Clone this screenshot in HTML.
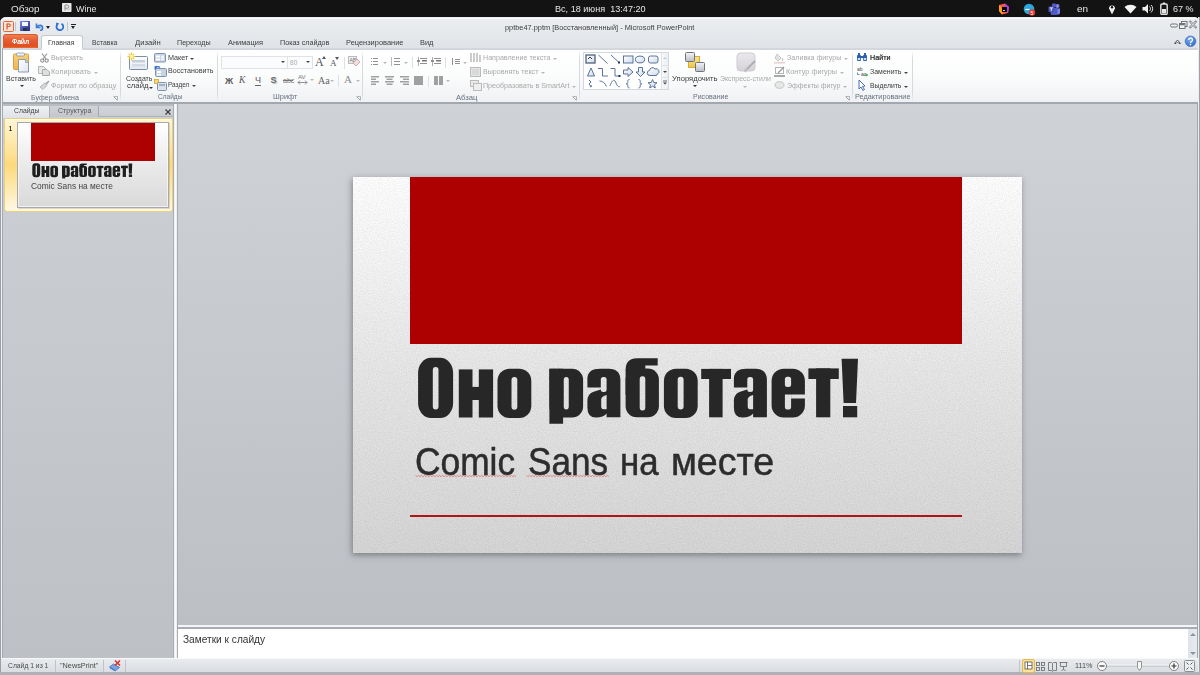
<!DOCTYPE html>
<html><head><meta charset="utf-8">
<style>
*{margin:0;padding:0;box-sizing:border-box}
html,body{width:1200px;height:675px;overflow:hidden;background:#131313;font-family:"Liberation Sans",sans-serif;position:relative}
div,svg{position:absolute}
.t{white-space:nowrap;line-height:1;transform-origin:0 0}
.sep{width:1px;background:linear-gradient(rgba(214,218,223,0),#d6dadf 15%,#d6dadf 85%,rgba(214,218,223,0))}
.arr{width:0;height:0;border-left:2px solid transparent;border-right:2px solid transparent;border-top:2px solid #444}
.arrd{width:0;height:0;border-left:2px solid transparent;border-right:2px solid transparent;border-top:2px solid #b8b8b8}

</style></head><body>
<!-- window frame -->
<div style="left:0;top:17px;width:1200px;height:658px;background:#c5c9ce;border-radius:6px 6px 0 0;overflow:hidden">
  <div style="left:0;top:0;width:1200px;height:16px;background:linear-gradient(#eceef1,#e6e9ec)"></div><div style="left:3px;top:0.5px;width:1194px;height:1.5px;background:#fafbfc"></div>
  <div style="left:0;top:16px;width:1200px;height:16px;background:linear-gradient(#e6e9ec,#dfe2e6)"></div>
  <div style="left:0;top:0;width:1px;height:658px;background:#9aa0a7"></div>
</div>
<!-- file tab -->
<div style="left:2.5px;top:34px;width:35px;height:14.8px;background:linear-gradient(#f08050 0%,#e65a30 40%,#df4d24 80%,#f0892f 100%);border-radius:3px 3px 0 0;border:1px solid #d55a30;border-bottom:none"></div>
<!-- home tab -->
<div style="left:41px;top:35px;width:42px;height:15px;background:linear-gradient(#ffffff,#fdfdfe);border:1px solid #c6cbd1;border-bottom:none;border-radius:3px 3px 0 0"></div>
<!-- ribbon body -->
<div style="left:1px;top:48px;width:1197px;height:54px;background:linear-gradient(#ffffff 0%,#fbfcfc 50%,#eff1f4 100%);border-top:2px solid #d3d7dc"></div>
<div style="left:42px;top:47px;width:40px;height:4px;background:#fff"></div>
<!-- ribbon bottom border -->
<div style="left:1px;top:102px;width:1198px;height:2px;background:#a3a8ae"></div>
<div style="left:1px;top:104px;width:177px;height:2px;background:#b9bdc2"></div>
<!-- group separators -->
<div class="sep" style="left:120px;top:51px;height:50px"></div>
<div class="sep" style="left:217px;top:51px;height:50px"></div>
<div class="sep" style="left:362px;top:51px;height:50px"></div>
<div class="sep" style="left:579px;top:51px;height:50px"></div>
<div class="sep" style="left:852px;top:51px;height:50px"></div>
<div class="sep" style="left:912px;top:51px;height:50px"></div>

<!-- left panel -->
<div style="left:3px;top:106px;width:171px;height:552px;background:linear-gradient(#cdd0d5,#bdc0c5)"></div>
<div style="left:3px;top:106px;width:171px;height:11px;background:linear-gradient(#d3d7db,#c9cdd2);border-bottom:1px solid #aeb3b9;border-right:1px solid #aeb3b9"></div>
<div style="left:3px;top:106px;width:47px;height:12px;background:linear-gradient(#f0f2f4,#dfe2e6);border-right:1px solid #a9aeb4"></div>
<div style="left:50px;top:106px;width:49px;height:11px;background:linear-gradient(#d0d4d9,#c3c7cc);border-right:1px solid #a4a9af"></div>
<svg style="left:164px;top:108px" width="8" height="8"><path d="M1.5 1.5L6.5 6.5M6.5 1.5L1.5 6.5" stroke="#444" stroke-width="1.4"/></svg>
<div style="left:1px;top:48px;width:1px;height:627px;background:#eef0f2"></div>
<div style="left:2px;top:48px;width:1px;height:627px;background:#a4a9af"></div>
<div style="left:173px;top:104px;width:1px;height:554px;background:#aab0b6"></div>
<!-- splitter -->
<div style="left:174px;top:104px;width:3px;height:554px;background:linear-gradient(90deg,#e9ebee,#fafbfc 50%,#e9ebee)"></div>
<div style="left:177px;top:104px;width:1px;height:554px;background:#a9adb3"></div>
<!-- main area -->
<div style="left:178px;top:104px;width:1019px;height:521px;background:linear-gradient(#cfd2d6,#bcbfc4)"></div>
<div style="left:178px;top:625px;width:1020px;height:2px;background:#f4f5f6"></div>
<div style="left:178px;top:627px;width:1020px;height:2px;background:#a9adb3"></div>
<!-- notes -->
<div style="left:178px;top:629px;width:1020px;height:29px;background:#fff"></div>
<div style="left:1188px;top:629px;width:10px;height:29px;background:linear-gradient(90deg,#dfe3e8,#e9ecef)"></div>
<svg style="left:1188px;top:630px" width="10" height="28"><path d="M2 6L5 3L8 6Z" fill="#8a96a2"/><path d="M2 22L5 25L8 22Z" fill="#8a96a2"/></svg>
<div style="left:1197px;top:104px;width:1px;height:571px;background:#a2a7ad"></div><div style="left:1198px;top:17px;width:1px;height:658px;background:#eceef0"></div><div style="left:1199px;top:17px;width:1px;height:658px;background:#9ea3a9"></div>
<!-- status bar -->
<div style="left:1px;top:658px;width:1197px;height:15px;background:linear-gradient(#e9ebee,#d9dce0);border-top:1px solid #f7f8f9"></div>
<div style="left:0;top:672px;width:1200px;height:3px;background:#aeb2b8"></div>
<div style="left:55px;top:660px;width:1px;height:12px;background:#c0c4c9"></div>
<div style="left:103px;top:660px;width:1px;height:12px;background:#c0c4c9"></div>
<div style="left:125px;top:660px;width:1px;height:12px;background:#c0c4c9"></div>
<div style="left:1019px;top:660px;width:1px;height:12px;background:#c0c4c9"></div>

<!-- slide thumbnail -->
<div style="left:4px;top:118px;width:169px;height:94px;background:linear-gradient(180deg,#fff6d6 0%,#fde39a 35%,#fdd97c 50%,#fde9ae 75%,#fff8e4 100%);border:1px solid #eccf7c;border-radius:3px"></div>
<div style="left:5px;top:119px;width:167px;height:1px;background:rgba(255,255,255,.7)"></div>
<div style="left:18px;top:123px;width:152px;height:86px;background:rgba(0,0,0,.12)"></div>
<div style="left:17px;top:122px;width:152px;height:86px;background:linear-gradient(#ffffff,#ececec 45%,#d9d9d9);border:1px solid #a6aaaf;box-shadow:inset 0 0 0 1px rgba(255,255,255,.6)">
  <div style="left:13px;top:0;width:124px;height:38px;background:#ad0000"></div>
</div>
<div class="t" style="left:31px;top:182px;font-size:9.3px;color:#444;transform:scaleX(0.9)">Comic Sans на месте</div>

<!-- main slide -->
<div style="left:353px;top:177px;width:669px;height:376px;background:linear-gradient(#ffffff,#f6f6f6 22%,#e8e8e8 52%,#d7d7d7 100%);box-shadow:-1px 2px 6px rgba(50,54,60,.5)">
  <svg style="left:0;top:0" width="669" height="376"><filter id="nz" x="0" y="0" width="100%" height="100%"><feTurbulence type="fractalNoise" baseFrequency="0.9" numOctaves="2" seed="3"/><feColorMatrix type="matrix" values="0 0 0 0 0  0 0 0 0 0  0 0 0 0 0  0 0 0 -1.6 1.1"/></filter><rect width="669" height="376" filter="url(#nz)" opacity="0.08"/></svg>
  <div style="left:57px;top:0;width:552px;height:167px;background:#ad0000"></div>
  <div style="left:57px;top:338px;width:552px;height:2px;background:#b01414"></div>
</div>
<!-- QAT -->
<svg style="left:3px;top:21px" width="11" height="11"><rect x="0.5" y="0.5" width="10" height="10" rx="1" fill="#fbe2d3" stroke="#e2683a"/><path d="M3.5 2.5h2.5a1.8 1.8 0 0 1 0 3.6H4.6V8.6H3.5Z" fill="#d24a1a"/><path d="M4.6 3.4v1.8h1.3a0.9 0.9 0 0 0 0-1.8Z" fill="#fbe2d3"/></svg>
<div style="left:15px;top:22px;width:1px;height:9px;background:#c3c7cc"></div>
<svg style="left:20px;top:21px" width="10" height="10"><rect x="0" y="0" width="10" height="10" rx="1" fill="#4353b8"/><rect x="0" y="0" width="10" height="10" rx="1" fill="url(#sg)"/><defs><linearGradient id="sg" x1="0" y1="0" x2="1" y2="1"><stop offset="0" stop-color="#7b8be0"/><stop offset="1" stop-color="#1f2a86"/></linearGradient></defs><rect x="2" y="1" width="6" height="4" fill="#f4f6fb"/><rect x="3" y="7" width="4" height="3" fill="#2a2f4a"/></svg>
<svg style="left:34px;top:22px" width="10" height="9"><path d="M2.5 1.5V5.5H6.5" fill="none" stroke="#3a7bd6" stroke-width="1.6"/><path d="M3 5C5 2.5 8.5 3 8.5 6C8.5 7.5 7.5 8.5 6 8.5" fill="none" stroke="#3a7bd6" stroke-width="1.7"/></svg>
<div style="left:46px;top:26px;width:0;height:0;border-left:2px solid transparent;border-right:2px solid transparent;border-top:3px solid #222"></div>
<svg style="left:55px;top:22px" width="9" height="9"><path d="M6.5 1.8A3.4 3.4 0 1 1 2.3 2.6" fill="none" stroke="#2f6fd2" stroke-width="1.8"/><path d="M1 0.5L4.2 1.5L1.6 4.3Z" fill="#2f6fd2"/></svg>
<div style="left:67px;top:22px;width:1px;height:9px;background:#c3c7cc"></div>
<div style="left:71px;top:24px;width:5px;height:1px;background:#222"></div>
<div style="left:71px;top:26px;width:0;height:0;border-left:2.5px solid transparent;border-right:2.5px solid transparent;border-top:3px solid #222"></div>
<!-- window controls -->
<svg style="left:1168px;top:19px" width="32" height="12">
 <rect x="2.5" y="5" width="7" height="3" rx="1.5" fill="#f4f5f7" stroke="#707378" stroke-width="1"/>
 <rect x="13.5" y="2.5" width="5.5" height="5" fill="#f4f5f7" stroke="#707378" stroke-width="1"/>
 <rect x="11.5" y="4.5" width="5.5" height="5" fill="#f4f5f7" stroke="#707378" stroke-width="1"/><rect x="12" y="5" width="4.5" height="1.3" fill="#707378"/>
 <path d="M22.3 2.8l5.4 5.4M27.7 2.8l-5.4 5.4" stroke="#808388" stroke-width="2.2" stroke-linecap="square"/><path d="M22.3 2.8l5.4 5.4M27.7 2.8l-5.4 5.4" stroke="#f4f5f7" stroke-width=".9"/>
</svg>
<svg style="left:1173px;top:38px" width="9" height="7"><path d="M1.5 5.5L4.5 2L7.5 5.5L6 5.5L4.5 4L3 5.5Z" fill="#fff" stroke="#555" stroke-width="1" stroke-linejoin="round"/></svg>
<svg style="left:1184px;top:35px" width="13" height="13"><defs><radialGradient id="hg" cx=".4" cy=".3" r=".8"><stop offset="0" stop-color="#79aef0"/><stop offset="1" stop-color="#2c69c4"/></radialGradient></defs><circle cx="6.5" cy="6.3" r="5.3" fill="url(#hg)" stroke="#2b63b8" stroke-width=".6"/><path d="M4.7 5a1.9 1.9 0 1 1 2.6 1.7c-.6.3-.8.6-.8 1.3" fill="none" stroke="#fff" stroke-width="1.3"/><circle cx="6.5" cy="9.6" r=".8" fill="#fff"/></svg>
<!-- top bar icons -->
<svg style="left:62px;top:3px" width="9.5" height="9"><rect x="0" y="0" width="9.5" height="9" rx=".8" fill="#e9e9e9"/><path d="M3 7.5V2h2.2a1.6 1.6 0 0 1 0 3.2H3" fill="none" stroke="#8a8a8a" stroke-width="1"/><path d="M5.5 6.5c1.5 .3 2.5-.3 2-1" fill="none" stroke="#aaa" stroke-width=".8"/></svg>
<svg style="left:998px;top:3px" width="12" height="12"><path d="M1 2L7 0.5L11 4L10 10L4 11.5L1 8Z" fill="#ff5a3c"/><path d="M7 0.5L11 4L10 10L6 7Z" fill="#b23cf0"/><path d="M1 2L6 7L4 11.5L1 8Z" fill="#ff9f1c"/><rect x="4" y="4" width="5" height="5" fill="#000"/><rect x="5" y="7.2" width="2" height="0.8" fill="#fff"/></svg>
<svg style="left:1023px;top:3px" width="13" height="13"><circle cx="6" cy="6" r="5.3" fill="#29a8e0"/><path d="M2.5 6.5h4" stroke="#fff" stroke-width="1.2"/><circle cx="9" cy="9.5" r="3.2" fill="#e53935"/><text x="9" y="11.5" font-size="5" fill="#fff" text-anchor="middle" font-family="Liberation Sans">5</text></svg>
<svg style="left:1048px;top:3px" width="13" height="12"><circle cx="9.5" cy="3" r="2" fill="#7b83eb"/><path d="M7.5 5.5h4.5v4a2 2 0 0 1-2 2h-2.5Z" fill="#7b83eb"/><circle cx="6" cy="2.5" r="2.2" fill="#5059c9"/><path d="M2.5 5h7v4.5a3 3 0 0 1-3 3h-1a3 3 0 0 1-3-3Z" fill="#5059c9"/><rect x="0.5" y="3.5" width="5.5" height="5.5" rx=".6" fill="#4b53bc"/><path d="M1.8 4.9h3M3.3 4.9v3" stroke="#fff" stroke-width="0.9"/></svg>
<svg style="left:1108px;top:3px" width="8" height="12"><path d="M4 11.5L1 5.5A3 3 0 1 1 7 5.5Z" fill="#eee"/><circle cx="4" cy="4.2" r="1.2" fill="#131313"/></svg>
<svg style="left:1124px;top:4px" width="13" height="10"><path d="M0.5 3A9 9 0 0 1 12.5 3L6.5 9.5Z" fill="#f4f4f4"/></svg>
<svg style="left:1142px;top:3px" width="12" height="11"><path d="M0.5 4h2.5l3-3v9.5l-3-3H0.5Z" fill="#eee"/><path d="M7.5 3.5a3 3 0 0 1 0 4.5M9 2a5 5 0 0 1 0 7.5" fill="none" stroke="#ddd" stroke-width="1"/></svg>
<svg style="left:1160px;top:2px" width="8" height="13"><rect x="3" y="0.5" width="2" height="1.5" fill="#e6e6e6"/><rect x="0.8" y="2" width="6.4" height="10.4" rx="1.2" fill="none" stroke="#e6e6e6" stroke-width="1.4"/><rect x="2" y="7" width="4" height="4.5" fill="#e6e6e6"/></svg>
<!-- Clipboard group -->
<svg style="left:12px;top:52px" width="20" height="21">
 <defs><linearGradient id="cb" x1="0" y1="0" x2="0" y2="1"><stop offset="0" stop-color="#f8d27a"/><stop offset="1" stop-color="#eeb44a"/></linearGradient>
 <linearGradient id="dc" x1="0" y1="0" x2="1" y2="1"><stop offset="0" stop-color="#ffffff"/><stop offset="1" stop-color="#dfe5ee"/></linearGradient></defs>
 <rect x="1.5" y="2" width="15" height="15.5" rx="1.2" fill="url(#cb)" stroke="#d6a043"/>
 <rect x="4.5" y="1" width="8" height="3" rx="1" fill="#eef1f5" stroke="#8a95a3" stroke-width=".8"/>
 <path d="M6.5 7.5h7l3 3v9.5h-10Z" fill="url(#dc)" stroke="#8d9bb0"/>
 <path d="M13.5 7.5v3h3" fill="#c9d3e2" stroke="#8d9bb0" stroke-width=".8"/>
</svg>
<div class="arr" style="left:20px;top:85px;border-top-color:#333;border-left-width:2.5px;border-right-width:2.5px;border-top-width:2.5px"></div>
<svg style="left:40px;top:53px" width="9" height="10"><path d="M2 0.5L6 6M7 0.5L3 6" stroke="#9a9a9a" stroke-width="1.2"/><circle cx="2.3" cy="7.6" r="1.6" fill="none" stroke="#8f8f8f" stroke-width="1.1"/><circle cx="6.7" cy="7.6" r="1.6" fill="none" stroke="#8f8f8f" stroke-width="1.1"/></svg>
<svg style="left:38px;top:66px" width="12" height="10"><path d="M0.5 0.5h5l2 2v5h-7Z" fill="#e9e9e9" stroke="#b5b5b5"/><path d="M4.5 3.5h4.5l2.5 2.5v3.5h-7Z" fill="#dedede" stroke="#aaaaaa"/></svg>
<svg style="left:39px;top:80px" width="11" height="10"><path d="M1 7L5.5 3L8 5.5L4 9.5Z" fill="#d6d6d6" stroke="#b0b0b0" stroke-width=".8"/><path d="M6 3.5L9.5 0.5L10.5 1.5L7.5 5Z" fill="#a8a8a8"/></svg>
<div class="arrd" style="left:94px;top:72px"></div>
<!-- Slides group -->
<svg style="left:127px;top:52px" width="22" height="20">
 <defs><linearGradient id="ns" x1="0" y1="0" x2="0" y2="1"><stop offset="0" stop-color="#ffffff"/><stop offset="1" stop-color="#e3e8ef"/></linearGradient></defs>
 <rect x="2.5" y="4.5" width="18" height="13" rx="1" fill="url(#ns)" stroke="#7d8ea4"/>
 <rect x="5" y="8" width="13" height="2.5" fill="#c5cfdc"/><rect x="5" y="12" width="13" height="2.5" fill="#d3dbe6"/>
 <path d="M4.5 0.5v8M0.5 4.5h8M1.8 1.8l5.4 5.4M7.2 1.8l-5.4 5.4" stroke="#f2c11e" stroke-width="1.1"/><circle cx="4.5" cy="4.5" r="1.8" fill="#fff4a8"/>
</svg>
<div class="arr" style="left:149px;top:87px;border-top-color:#333"></div>
<svg style="left:154px;top:53px" width="12" height="10"><rect x=".5" y=".5" width="11" height="8.5" rx="1" fill="#c8d3e2" stroke="#7f93ad"/><rect x="2" y="2.5" width="4" height="2" fill="#fff"/><rect x="2" y="5.5" width="4" height="2" fill="#fff"/><rect x="7" y="2.5" width="3" height="5" fill="#eef2f7"/></svg>
<div class="arr" style="left:190px;top:58px;border-top-color:#444"></div>
<svg style="left:154px;top:65px" width="13" height="12"><rect x="1.5" y="3.5" width="11" height="8" rx="1" fill="#c8d3e2" stroke="#7f93ad"/><rect x="3" y="6" width="4" height="2" fill="#fff"/><rect x="3" y="9" width="4" height="1.5" fill="#fff"/><path d="M1 4.5C1 1.5 4 1 6 2.5" fill="none" stroke="#2e6ad0" stroke-width="1.4"/><path d="M0 2L2.5 0.5L2.5 4Z" fill="#2e6ad0"/></svg>
<svg style="left:154px;top:79px" width="13" height="12"><rect x="0.5" y="0.5" width="4" height="4" fill="#f6d86a" stroke="#d7a42c" stroke-width=".8"/><rect x="3.5" y="3.5" width="9" height="8" rx="1" fill="#dbe2eb" stroke="#7f93ad"/><rect x="5" y="5" width="6" height="2" fill="#9eb1c8"/></svg>
<div class="arr" style="left:192px;top:85px;border-top-color:#444"></div>
<!-- Font group -->
<div style="left:221px;top:56px;width:67px;height:13px;border:1px solid #dfe3e8;background:#fbfcfd"></div>
<div style="left:288px;top:56px;width:25px;height:13px;border:1px solid #dfe3e8;border-left:none;background:#fbfcfd"></div>
<div class="arr" style="left:281px;top:61px;border-top-color:#444"></div>
<div class="arr" style="left:306px;top:61px;border-top-color:#444"></div>
<div class="t" style="left:315px;top:56px;font-family:'Liberation Serif';font-size:12px;color:#555">A</div>
<svg style="left:322px;top:56px" width="4" height="3"><path d="M0 3L2 0L4 3Z" fill="#555"/></svg>
<div class="t" style="left:330px;top:59px;font-family:'Liberation Serif';font-size:9px;color:#555">A</div>
<svg style="left:335px;top:57px" width="4" height="3"><path d="M0 0L2 3L4 0Z" fill="#555"/></svg>
<div style="left:344px;top:57px;width:1px;height:12px;background:#dde0e4"></div>
<svg style="left:348px;top:56px" width="13" height="12"><rect x=".5" y=".5" width="8" height="7" fill="#eee" stroke="#bbb"/><text x="1.5" y="6" font-size="5" fill="#777" font-family="Liberation Sans">AB</text><path d="M5 7L9 3L12 6L8 10Z" fill="#f3dede" stroke="#b9a0a0" stroke-width=".8"/></svg>
<div class="t" style="left:225px;top:76.5px;font-size:9px;font-weight:bold;color:#5a5a5a">Ж</div>
<div class="t" style="left:239px;top:76px;font-family:'Liberation Serif';font-style:italic;font-size:9.5px;color:#5a5a5a">К</div>
<div class="t" style="left:255px;top:76px;font-size:9px;color:#5a5a5a">Ч</div>
<div style="left:255px;top:85px;width:6px;height:1px;background:#666"></div>
<div class="t" style="left:270.5px;top:76px;font-size:9px;font-weight:bold;color:#6a6a6a;text-shadow:1px 1px 1px #bbb">S</div>
<div class="t" style="left:283px;top:77px;font-size:7px;color:#777">abc</div>
<div style="left:283px;top:80px;width:10px;height:1px;background:#777"></div>
<div class="t" style="left:298px;top:74px;font-size:6px;color:#777">AV</div>
<svg style="left:297px;top:80px" width="11" height="5"><path d="M1 2.5h9M1 2.5l2-2M1 2.5l2 2M10 2.5l-2-2M10 2.5l-2 2" stroke="#777" stroke-width=".8"/></svg>
<div class="arrd" style="left:310px;top:79px"></div>
<div class="t" style="left:318px;top:76px;font-family:'Liberation Serif';font-size:10px;color:#666">Aa</div>
<div class="arrd" style="left:330px;top:80px"></div>
<div style="left:338px;top:75px;width:1px;height:12px;background:#dde0e4"></div>
<div class="t" style="left:344px;top:74px;font-family:'Liberation Serif';font-size:11px;color:#8a8a8a">A</div>
<div class="arrd" style="left:356px;top:80px"></div>
<!-- Paragraph group -->
<svg style="left:370px;top:56px;opacity:.8" width="100" height="32">
 <g fill="#777">
  <rect x="1" y="2" width="1" height="1"/><rect x="3" y="2" width="5" height="1"/>
  <rect x="1" y="5" width="1" height="1"/><rect x="3" y="5" width="5" height="1"/>
  <rect x="1" y="8" width="1" height="1"/><rect x="3" y="8" width="5" height="1"/>
  <rect x="21" y="1" width="1" height="9" fill="#aaa"/><rect x="24" y="2" width="6" height="1"/><rect x="24" y="5" width="6" height="1"/><rect x="24" y="8" width="6" height="1"/>
  <rect x="48" y="1" width="1" height="9" fill="#999"/><rect x="50" y="2" width="7" height="1"/><rect x="52" y="4" width="5" height="1.5" fill="#555"/><rect x="50" y="7" width="7" height="1"/><rect x="47" y="4" width="3" height="2"/>
  <rect x="62" y="1" width="1" height="9" fill="#999"/><rect x="64" y="2" width="7" height="1"/><rect x="66" y="4" width="5" height="1.5" fill="#555"/><rect x="64" y="7" width="7" height="1"/><rect x="61" y="4" width="3" height="2"/>
  <rect x="82" y="2" width="1" height="7"/><rect x="85" y="3" width="5" height="1"/><rect x="85" y="5" width="5" height="1"/><rect x="85" y="7" width="5" height="1"/>
 </g>
 <g fill="#8a8a8a">
  <rect x="1" y="20" width="8" height="1.5"/><rect x="1" y="22.5" width="5" height="1.5"/><rect x="1" y="25" width="8" height="1.5"/><rect x="1" y="27.5" width="5" height="1.5"/>
  <rect x="15" y="20" width="9" height="1.5"/><rect x="16.5" y="22.5" width="6" height="1.5"/><rect x="15" y="25" width="9" height="1.5"/><rect x="16.5" y="27.5" width="6" height="1.5"/>
  <rect x="30" y="20" width="9" height="1.5"/><rect x="33" y="22.5" width="6" height="1.5"/><rect x="30" y="25" width="9" height="1.5"/><rect x="33" y="27.5" width="6" height="1.5"/>
  <rect x="44" y="20" width="9" height="9"/>
  <rect x="64" y="20" width="4" height="9"/><rect x="69" y="20" width="4" height="9"/>
 </g>
</svg>
<div class="arrd" style="left:383px;top:62px"></div>
<div class="arrd" style="left:404px;top:62px"></div>
<div class="arrd" style="left:463px;top:62px"></div>
<div class="arrd" style="left:446px;top:80px"></div>
<div style="left:412px;top:57px;width:1px;height:11px;background:#dde0e4"></div>
<div style="left:445px;top:57px;width:1px;height:11px;background:#dde0e4"></div>
<div style="left:428px;top:76px;width:1px;height:11px;background:#dde0e4"></div>
<svg style="left:469px;top:52px" width="14" height="40">
 <g stroke="#999" stroke-width="1"><path d="M2 1v9M5 1v9M8 1v9M11 3v7"/></g>
 <rect x="1.5" y="15.5" width="10" height="9" fill="#e6e6e6" stroke="#bbb"/><path d="M3 18h7M3 20h7M3 22h7" stroke="#ccc"/>
 <rect x="1.5" y="28.5" width="8" height="6" fill="#e8e8e8" stroke="#bbb"/><rect x="4.5" y="31.5" width="8" height="7" fill="#eee" stroke="#bbb"/>
</svg>
<div class="arrd" style="left:553px;top:58px"></div>
<div class="arrd" style="left:541px;top:72px"></div>
<div class="arrd" style="left:572px;top:86px"></div>
<!-- launchers -->
<svg style="left:113px;top:96px" width="5" height="5"><path d="M.5 .5h4v4" fill="none" stroke="#b0b5bb"/><path d="M1 1l3 3" stroke="#9aa0a7"/></svg>
<svg style="left:356px;top:96px" width="5" height="5"><path d="M.5 .5h4v4" fill="none" stroke="#b0b5bb"/><path d="M1 1l3 3" stroke="#9aa0a7"/></svg>
<svg style="left:572px;top:96px" width="5" height="5"><path d="M.5 .5h4v4" fill="none" stroke="#b0b5bb"/><path d="M1 1l3 3" stroke="#9aa0a7"/></svg>
<svg style="left:845px;top:96px" width="5" height="5"><path d="M.5 .5h4v4" fill="none" stroke="#b0b5bb"/><path d="M1 1l3 3" stroke="#9aa0a7"/></svg>
<!-- Shapes gallery -->
<div style="left:583px;top:52px;width:86px;height:38px;border:1px solid #d3d8de;background:#fff"></div>
<div style="left:661px;top:53px;width:7px;height:36px;background:linear-gradient(90deg,#f7f8fa,#eceff2);border-left:1px solid #dfe3e8"></div>
<div style="left:661px;top:65px;width:7px;height:1px;background:#dfe3e8"></div>
<div style="left:661px;top:77px;width:7px;height:1px;background:#dfe3e8"></div>
<svg style="left:662px;top:56px" width="6" height="4"><path d="M1 3L3 1L5 3Z" fill="#c8c8c8"/></svg>
<svg style="left:662px;top:70px" width="6" height="4"><path d="M1 1L3 3L5 1Z" fill="#444"/></svg>
<svg style="left:662px;top:80px" width="6" height="6"><path d="M1 1h4" stroke="#444" stroke-width=".8"/><path d="M1 2.5L3 4.5L5 2.5Z" fill="#444"/></svg>
<svg style="left:584px;top:53px" width="77" height="37" fill="none" stroke="#4a6590" stroke-width="0.9">
 <defs><linearGradient id="shf" x1="0" y1="0" x2="1" y2="1"><stop offset="0" stop-color="#ffffff"/><stop offset="1" stop-color="#cfdcec"/></linearGradient></defs>
 <rect x="2" y="2" width="9" height="8" fill="url(#shf)" stroke="#52627a" stroke-width="1.3"/><path d="M4 6L6 4L8 6" stroke="#222"/>
 <path d="M14.5 2L23.5 10.5"/>
 <path d="M27 2L35 9.5"/><rect x="34" y="8.5" width="2" height="2" fill="#1d3560" stroke="none"/>
 <rect x="39.5" y="3" width="9.5" height="7" fill="url(#shf)"/>
 <ellipse cx="56" cy="6.5" rx="4.6" ry="3.4" fill="url(#shf)"/>
 <rect x="64.5" y="3" width="9.5" height="7" rx="2" fill="url(#shf)"/>
 <path d="M7 15L3.5 23H10.5Z" fill="url(#shf)"/>
 <path d="M14 15.5H18.5V23H24"/>
 <path d="M26.5 15.5H31V23H35"/><rect x="34.5" y="22" width="2" height="2" fill="#1d3560" stroke="none"/>
 <path d="M39.5 17H44V14.5L49 19L44 23.5V21H39.5Z" fill="url(#shf)"/>
 <path d="M54.5 14.5V19H52L56.5 23.5L61 19H58.5V14.5Z" fill="url(#shf)"/>
 <path d="M66 22.5A2.5 2.5 0 0 1 65.5 17.5A3 3 0 0 1 71 16A2.5 2.5 0 0 1 73.5 21A2 2 0 0 1 72 22.5Z" fill="url(#shf)"/>
 <path d="M5 27L7 29L5 31L7 33.5M6 34l1.5-.5L7 32"/>
 <path d="M15.5 28C18.5 28 21 30 22.5 33.5"/>
 <path d="M26 33C28.5 26 30.5 26 32 30C33.5 34 35 34 36 33.5"/>
 <path d="M45.5 26.5C43.5 26.5 43.8 28 43.8 29.5C43.8 30.5 43 30.8 42 30.8C43 30.8 43.8 31.2 43.8 32.2C43.8 33.7 43.5 35 45.5 35"/>
 <path d="M54.5 26.5C56.5 26.5 56.2 28 56.2 29.5C56.2 30.5 57 30.8 58 30.8C57 30.8 56.2 31.2 56.2 32.2C56.2 33.7 56.5 35 54.5 35"/>
 <path d="M68.5 26.5L69.7 29.5L73 29.7L70.5 31.8L71.3 35L68.5 33.2L65.7 35L66.5 31.8L64 29.7L67.3 29.5Z" fill="url(#shf)"/>
</svg>
<!-- Arrange -->
<svg style="left:684px;top:51px" width="22" height="22">
 <defs><linearGradient id="gq" x1="0" y1="0" x2="0" y2="1"><stop offset="0" stop-color="#f3f4f6"/><stop offset="1" stop-color="#b9bec5"/></linearGradient>
 <linearGradient id="yq" x1="0" y1="0" x2="0" y2="1"><stop offset="0" stop-color="#fbe58a"/><stop offset="1" stop-color="#efc84a"/></linearGradient></defs>
 <rect x="4.5" y="5.5" width="11" height="11" fill="url(#yq)" stroke="#d6ad3a"/>
 <rect x="1.5" y="1.5" width="9" height="9" rx="1" fill="url(#gq)" stroke="#6e747c"/>
 <rect x="11.5" y="11.5" width="9" height="9" rx="1" fill="url(#gq)" stroke="#6e747c"/>
</svg>
<div class="arr" style="left:693px;top:85px;border-top-color:#333"></div>
<svg style="left:736px;top:52px" width="21" height="21"><defs><linearGradient id="qs" x1="0" y1="0" x2="0" y2="1"><stop offset="0" stop-color="#eae8ec"/><stop offset="1" stop-color="#d6d3d8"/></linearGradient></defs><rect x="1" y="1" width="18" height="18" rx="3.5" fill="url(#qs)" stroke="#cfcbd0"/><path d="M19 9L11 17" stroke="#b0adb2" stroke-width="2"/><path d="M11 17L8.5 19.5" stroke="#c0bcc2" stroke-width="2.5"/></svg>
<div class="arrd" style="left:743px;top:86px"></div>
<!-- Shape fill etc -->
<svg style="left:774px;top:52px" width="12" height="38">
 <path d="M3 2L7 6L4 9L1 6Z" fill="#e3e3e3" stroke="#bbb" stroke-width=".8"/><path d="M8 6c1 1.5 1.5 2.5 0 3" fill="none" stroke="#bbb"/>
 <rect x="0" y="10" width="11" height="1.5" fill="#e8d0d0"/>
 <rect x="1.5" y="15.5" width="8" height="6" fill="#fff" stroke="#b5b5b5"/><path d="M4 21L10 15" stroke="#999" stroke-width="1.2"/>
 <rect x="0" y="23" width="11" height="2" fill="#a8a8a8"/>
 <ellipse cx="5.5" cy="33" rx="4.5" ry="3.3" fill="#e6e6e6" stroke="#c3c3c3"/>
</svg>
<div class="arrd" style="left:844px;top:58px"></div>
<div class="arrd" style="left:840px;top:72px"></div>
<div class="arrd" style="left:843px;top:86px"></div>
<!-- Editing -->
<svg style="left:856px;top:52px" width="13" height="40">
 <g fill="#2f5fb3"><rect x="1" y="3" width="4" height="6" rx="1"/><rect x="7" y="3" width="4" height="6" rx="1"/><rect x="2" y="1" width="2" height="3"/><rect x="8" y="1" width="2" height="3"/><rect x="4" y="4" width="4" height="2"/></g>
 <rect x="1.8" y="6" width="2.4" height="2" fill="#cfe0ff"/><rect x="7.8" y="6" width="2.4" height="2" fill="#cfe0ff"/>
 <text x="1" y="19" font-size="5" fill="#444" font-family="Liberation Sans">ab</text><text x="5" y="23.5" font-size="5" fill="#444" font-family="Liberation Sans">ac</text><path d="M1.5 20.5v2h2" fill="none" stroke="#3a6fd0" stroke-width=".8"/><circle cx="10.5" cy="23" r="1.3" fill="#3cb54a"/>
 <path d="M3 28V37L5 35L7 38.5L8.5 37.5L6.5 34.5L9 34Z" fill="#fff" stroke="#3a5fae" stroke-width=".9"/>
</svg>
<div class="arr" style="left:904px;top:72px;border-top-color:#444"></div>
<div class="arr" style="left:904px;top:86px;border-top-color:#444"></div>
<!-- status bar icons -->
<svg style="left:108px;top:659px" width="14" height="13"><path d="M1.5 8L5.5 5L11.5 8.5L7.5 11.5Z" fill="#7aa6e0" stroke="#3b6fc0" stroke-width=".8"/><path d="M2 8.5L7.5 11.5L7.5 12.5L2 9.5Z" fill="#3b6fc0"/><path d="M7 1.5L12 6.5M12 1.5L7 6.5" stroke="#e0302a" stroke-width="1.6"/></svg>
<svg style="left:1022px;top:659px" width="174" height="14">
 <rect x="0.5" y="0.5" width="12" height="13" rx="1.5" fill="#fbe39a" stroke="#e4b94e"/>
 <rect x="3" y="3" width="7" height="7" fill="#fff" stroke="#555" stroke-width=".8"/><path d="M5.5 3v7M5.5 6.5h4.5" stroke="#555" stroke-width=".8"/>
 <g fill="none" stroke="#666" stroke-width=".8"><rect x="14.5" y="3.5" width="3" height="3"/><rect x="19.5" y="3.5" width="3" height="3"/><rect x="14.5" y="8.5" width="3" height="3"/><rect x="19.5" y="8.5" width="3" height="3"/>
 <path d="M26.5 3.5h3l1 1l1-1h3v8h-3l-1 1l-1-1h-3Z"/><path d="M30.5 4.5v7"/>
 <path d="M37.5 3.5h8M38.5 3.5v4h6v-4M41.5 7.5v3M39.5 11.5l2-1l2 1"/></g>
 <circle cx="80" cy="7" r="4.5" fill="#fafafa" stroke="#777" stroke-width=".9"/><path d="M77.5 7h5" stroke="#333" stroke-width="1.2"/>
 <path d="M85 7h62" stroke="#b8bcc2" stroke-width="1"/><path d="M85 6h62" stroke="#f5f6f7" stroke-width="1"/>
 <path d="M115.5 2.5h4v6l-2 3l-2-3Z" fill="#f8f8f8" stroke="#7a7a7a" stroke-width=".8"/>
 <circle cx="152" cy="7" r="4.5" fill="#fafafa" stroke="#777" stroke-width=".9"/><path d="M149.5 7h5M152 4.5v5" stroke="#333" stroke-width="1.2"/>
 <rect x="162.5" y="1.5" width="10" height="11" rx="1" fill="#eceef0" stroke="#8a8f96"/><path d="M164.5 3.5l2 2M170.5 3.5l-2 2M164.5 10.5l2-2M170.5 10.5l-2-2" stroke="#444" stroke-width=".9"/>
</svg>
<svg style="left:0;top:0" width="1200" height="675">
<defs><mask id="tm" maskUnits="userSpaceOnUse" x="0" y="0" width="1200" height="675"><rect x="0" y="0" width="1200" height="675" fill="#fff"/><g fill="#000"><rect x="432.80" y="366.90" width="5.70" height="42.50" rx="2.8" ry="3"/><rect x="472.50" y="369.00" width="6.30" height="17.90"/><rect x="472.50" y="400.00" width="6.30" height="18.00"/><rect x="511.50" y="376.90" width="5.80" height="32.90" rx="2.8" ry="3"/><rect x="563.75" y="376.90" width="5.00" height="32.50" rx="2.5" ry="3"/><rect x="600.80" y="377.10" width="5.80" height="14.90" rx="2.5" ry="2.5"/><path d="M606.60 394.9 L606.60 409.2 L603.50 409.2 Q601.20 409.2 601.20 406 L601.20 399 Q601.50 396.5 606.60 394.9 Z"/><rect x="639.70" y="376.20" width="5.60" height="34.40" rx="2.5" ry="3"/><rect x="677.70" y="376.80" width="5.90" height="32.60" rx="2.8" ry="3"/><rect x="747.30" y="377.10" width="5.80" height="14.90" rx="2.5" ry="2.5"/><path d="M753.10 394.9 L753.10 409.2 L750.00 409.2 Q747.70 409.2 747.70 406 L747.70 399 Q748.00 396.5 753.10 394.9 Z"/><rect x="784.90" y="376.70" width="6.20" height="10.20" rx="2.5" ry="2.5"/><rect x="791.10" y="394.50" width="14.90" height="4.00"/><path d="M784.9 394.5 L791.1 394.5 L791.1 407 Q791.1 409.6 788 409.6 Q784.9 409.6 784.9 407 Z"/></g></mask></defs>
<g fill="#272727" mask="url(#tm)"><rect x="418.10" y="357.80" width="35.00" height="60.30" rx="13" ry="15"/><rect x="458.80" y="369.40" width="34.30" height="48.10"/><rect x="497.50" y="368.75" width="33.80" height="49.35" rx="12" ry="12"/><rect x="549.40" y="368.75" width="13.70" height="55.00"/><rect x="549.40" y="368.75" width="33.70" height="48.75" rx="11" ry="11"/><rect x="549.40" y="368.75" width="10.60" height="11.25"/><path d="M587.40 387.5 L587.40 378 Q588.00 368.7 600.00 368.7 L609.00 368.7 Q620.40 369 620.40 380 L620.40 417.2 L606.60 417.2 L606.60 413.5 Q603.50 417.6 596.00 417.6 Q587.40 417.6 587.40 408 L587.40 400.5 Q587.60 394 593.00 392 L606.60 387.5 Z"/><rect x="625.60" y="368.50" width="33.30" height="48.80" rx="11" ry="11"/><path d="M625.6 395 L625.6 370 Q625.6 358.2 637 358.2 L657.7 358.2 L657.7 365.5 L645.3 365.5 L645.3 395 Z"/><rect x="663.90" y="368.70" width="33.80" height="49.30" rx="12" ry="12"/><rect x="701.20" y="368.90" width="29.80" height="10.10"/><rect x="709.10" y="368.90" width="13.50" height="48.40"/><path d="M733.90 387.5 L733.90 378 Q734.50 368.7 746.50 368.7 L755.50 368.7 Q766.90 369 766.90 380 L766.90 417.2 L753.10 417.2 L753.10 413.5 Q750.00 417.6 742.50 417.6 Q733.90 417.6 733.90 408 L733.90 400.5 Q734.10 394 739.50 392 L753.10 387.5 Z"/><rect x="771.60" y="368.70" width="33.30" height="48.90" rx="12" ry="12"/><rect x="808.40" y="368.40" width="30.40" height="10.60"/><rect x="816.10" y="368.40" width="14.20" height="48.90"/><path d="M841.60 358.80 L858.00 358.80 L856.00 403.10 L843.60 403.10Z"/><rect x="843.00" y="406.00" width="14.20" height="11.30"/></g>
</svg>
<svg style="left:0;top:0" width="200" height="220">
<defs><mask id="tm2" maskUnits="userSpaceOnUse" x="0" y="0" width="1200" height="675"><rect x="0" y="0" width="1200" height="675" fill="#fff"/><g fill="#000"><rect x="432.80" y="366.90" width="5.70" height="42.50" rx="2.8" ry="3"/><rect x="472.50" y="369.00" width="6.30" height="17.90"/><rect x="472.50" y="400.00" width="6.30" height="18.00"/><rect x="511.50" y="376.90" width="5.80" height="32.90" rx="2.8" ry="3"/><rect x="563.75" y="376.90" width="5.00" height="32.50" rx="2.5" ry="3"/><rect x="600.80" y="377.10" width="5.80" height="14.90" rx="2.5" ry="2.5"/><path d="M606.60 394.9 L606.60 409.2 L603.50 409.2 Q601.20 409.2 601.20 406 L601.20 399 Q601.50 396.5 606.60 394.9 Z"/><rect x="639.70" y="376.20" width="5.60" height="34.40" rx="2.5" ry="3"/><rect x="677.70" y="376.80" width="5.90" height="32.60" rx="2.8" ry="3"/><rect x="747.30" y="377.10" width="5.80" height="14.90" rx="2.5" ry="2.5"/><path d="M753.10 394.9 L753.10 409.2 L750.00 409.2 Q747.70 409.2 747.70 406 L747.70 399 Q748.00 396.5 753.10 394.9 Z"/><rect x="784.90" y="376.70" width="6.20" height="10.20" rx="2.5" ry="2.5"/><rect x="791.10" y="394.50" width="14.90" height="4.00"/><path d="M784.9 394.5 L791.1 394.5 L791.1 407 Q791.1 409.6 788 409.6 Q784.9 409.6 784.9 407 Z"/></g></mask></defs>
<g transform="translate(17.5 122) scale(0.2272 0.2287) translate(-353 -177)"><g fill="#1e1e1e" mask="url(#tm2)"><rect x="418.10" y="357.80" width="35.00" height="60.30" rx="13" ry="15"/><rect x="458.80" y="369.40" width="34.30" height="48.10"/><rect x="497.50" y="368.75" width="33.80" height="49.35" rx="12" ry="12"/><rect x="549.40" y="368.75" width="13.70" height="55.00"/><rect x="549.40" y="368.75" width="33.70" height="48.75" rx="11" ry="11"/><rect x="549.40" y="368.75" width="10.60" height="11.25"/><path d="M587.40 387.5 L587.40 378 Q588.00 368.7 600.00 368.7 L609.00 368.7 Q620.40 369 620.40 380 L620.40 417.2 L606.60 417.2 L606.60 413.5 Q603.50 417.6 596.00 417.6 Q587.40 417.6 587.40 408 L587.40 400.5 Q587.60 394 593.00 392 L606.60 387.5 Z"/><rect x="625.60" y="368.50" width="33.30" height="48.80" rx="11" ry="11"/><path d="M625.6 395 L625.6 370 Q625.6 358.2 637 358.2 L657.7 358.2 L657.7 365.5 L645.3 365.5 L645.3 395 Z"/><rect x="663.90" y="368.70" width="33.80" height="49.30" rx="12" ry="12"/><rect x="701.20" y="368.90" width="29.80" height="10.10"/><rect x="709.10" y="368.90" width="13.50" height="48.40"/><path d="M733.90 387.5 L733.90 378 Q734.50 368.7 746.50 368.7 L755.50 368.7 Q766.90 369 766.90 380 L766.90 417.2 L753.10 417.2 L753.10 413.5 Q750.00 417.6 742.50 417.6 Q733.90 417.6 733.90 408 L733.90 400.5 Q734.10 394 739.50 392 L753.10 387.5 Z"/><rect x="771.60" y="368.70" width="33.30" height="48.90" rx="12" ry="12"/><rect x="808.40" y="368.40" width="30.40" height="10.60"/><rect x="816.10" y="368.40" width="14.20" height="48.90"/><path d="M841.60 358.80 L858.00 358.80 L856.00 403.10 L843.60 403.10Z"/><rect x="843.00" y="406.00" width="14.20" height="11.30"/></g></g>
</svg><svg style="left:0;top:470px" width="1200" height="12"><path d="M415.5 5.3 L417.0 6.7 L418.5 5.3 L420.0 6.7 L421.5 5.3 L423.0 6.7 L424.5 5.3 L426.0 6.7 L427.5 5.3 L429.0 6.7 L430.5 5.3 L432.0 6.7 L433.5 5.3 L435.0 6.7 L436.5 5.3 L438.0 6.7 L439.5 5.3 L441.0 6.7 L442.5 5.3 L444.0 6.7 L445.5 5.3 L447.0 6.7 L448.5 5.3 L450.0 6.7 L451.5 5.3 L453.0 6.7 L454.5 5.3 L456.0 6.7 L457.5 5.3 L459.0 6.7 L460.5 5.3 L462.0 6.7 L463.5 5.3 L465.0 6.7 L466.5 5.3 L468.0 6.7 L469.5 5.3 L471.0 6.7 L472.5 5.3 L474.0 6.7 L475.5 5.3 L477.0 6.7 L478.5 5.3 L480.0 6.7 L481.5 5.3 L483.0 6.7 L484.5 5.3 L486.0 6.7 L487.5 5.3 L489.0 6.7 L490.5 5.3 L492.0 6.7 L493.5 5.3 L495.0 6.7 L496.5 5.3 L498.0 6.7 L499.5 5.3 L501.0 6.7 L502.5 5.3 L504.0 6.7 L505.5 5.3 L507.0 6.7 L508.5 5.3 L510.0 6.7 L511.5 5.3 L513.0 6.7 L514.5 5.3 L516.0 6.7 M526.5 5.3 L528.0 6.7 L529.5 5.3 L531.0 6.7 L532.5 5.3 L534.0 6.7 L535.5 5.3 L537.0 6.7 L538.5 5.3 L540.0 6.7 L541.5 5.3 L543.0 6.7 L544.5 5.3 L546.0 6.7 L547.5 5.3 L549.0 6.7 L550.5 5.3 L552.0 6.7 L553.5 5.3 L555.0 6.7 L556.5 5.3 L558.0 6.7 L559.5 5.3 L561.0 6.7 L562.5 5.3 L564.0 6.7 L565.5 5.3 L567.0 6.7 L568.5 5.3 L570.0 6.7 L571.5 5.3 L573.0 6.7 L574.5 5.3 L576.0 6.7 L577.5 5.3 L579.0 6.7 L580.5 5.3 L582.0 6.7 L583.5 5.3 L585.0 6.7 L586.5 5.3 L588.0 6.7 L589.5 5.3 L591.0 6.7 L592.5 5.3 L594.0 6.7 L595.5 5.3 L597.0 6.7 L598.5 5.3 L600.0 6.7 L601.5 5.3 L603.0 6.7 L604.5 5.3 L606.0 6.7 L607.5 5.3 L609.0 6.7" fill="none" stroke="#e35a5a" stroke-width="0.8" opacity="0.85"/></svg>

<div class="t" style="left:10.55px;top:5.08px;font-size:9px;color:#e6e6e6;font-weight:400;transform:scaleX(1.100);">Обзор</div>
<div class="t" style="left:75.55px;top:5.08px;font-size:9px;color:#e6e6e6;font-weight:400;transform:scaleX(1.001);">Wine</div>
<div class="t" style="left:554.55px;top:5.08px;font-size:9px;color:#e6e6e6;font-weight:400;transform:scaleX(1.010);">Вс, 18 июня&nbsp; 13:47:20</div>
<div class="t" style="left:1076.55px;top:5.08px;font-size:9px;color:#e6e6e6;font-weight:400;transform:scaleX(1.108);">en</div>
<div class="t" style="left:1172.55px;top:5.08px;font-size:9px;color:#e6e6e6;font-weight:400;transform:scaleX(1.001);">67 %</div>
<div class="t" style="left:504.65px;top:23.77px;font-size:7px;color:#3d3d3d;font-weight:400;transform:scaleX(1.055);">pptbe47.pptm [Восстановленный] - Microsoft PowerPoint</div>
<div class="t" style="left:11.62px;top:37.95px;font-size:7.5px;color:#ffffff;font-weight:400;transform:scaleX(0.917);text-shadow:0 0 0.4px #fff">Файл</div>
<div class="t" style="left:47.65px;top:38.57px;font-size:7px;color:#3e3e3e;font-weight:400;transform:scaleX(0.991);">Главная</div>
<div class="t" style="left:91.65px;top:38.57px;font-size:7px;color:#3e3e3e;font-weight:400;transform:scaleX(0.976);">Вставка</div>
<div class="t" style="left:134.65px;top:38.57px;font-size:7px;color:#3e3e3e;font-weight:400;transform:scaleX(1.099);">Дизайн</div>
<div class="t" style="left:177.05px;top:38.57px;font-size:7px;color:#3e3e3e;font-weight:400;transform:scaleX(1.021);">Переходы</div>
<div class="t" style="left:227.65px;top:38.57px;font-size:7px;color:#3e3e3e;font-weight:400;transform:scaleX(1.063);">Анимация</div>
<div class="t" style="left:279.65px;top:38.57px;font-size:7px;color:#3e3e3e;font-weight:400;transform:scaleX(1.025);">Показ слайдов</div>
<div class="t" style="left:345.65px;top:38.57px;font-size:7px;color:#3e3e3e;font-weight:400;transform:scaleX(1.063);">Рецензирование</div>
<div class="t" style="left:419.65px;top:38.57px;font-size:7px;color:#3e3e3e;font-weight:400;transform:scaleX(1.061);">Вид</div>
<div class="t" style="left:6.15px;top:75.37px;font-size:7px;color:#3b3b3b;font-weight:400;transform:scaleX(1.008);">Вставить</div>
<div class="t" style="left:51.15px;top:53.57px;font-size:7px;color:#a9a9a9;font-weight:400;transform:scaleX(1.025);">Вырезать</div>
<div class="t" style="left:51.15px;top:67.57px;font-size:7px;color:#a9a9a9;font-weight:400;transform:scaleX(1.059);">Копировать</div>
<div class="t" style="left:50.65px;top:81.67px;font-size:7px;color:#a9a9a9;font-weight:400;transform:scaleX(1.042);">Формат по образцу</div>
<div class="t" style="left:31.15px;top:93.87px;font-size:7px;color:#66717f;font-weight:400;transform:scaleX(1.007);">Буфер обмена</div>
<div class="t" style="left:125.65px;top:75.07px;font-size:7px;color:#3b3b3b;font-weight:400;transform:scaleX(0.993);">Создать</div>
<div class="t" style="left:126.65px;top:82.47px;font-size:7px;color:#3b3b3b;font-weight:400;transform:scaleX(1.102);">слайд</div>
<div class="t" style="left:167.65px;top:54.07px;font-size:7px;color:#3b3b3b;font-weight:400;transform:scaleX(1.031);">Макет</div>
<div class="t" style="left:167.65px;top:67.27px;font-size:7px;color:#3b3b3b;font-weight:400;transform:scaleX(1.013);">Восстановить</div>
<div class="t" style="left:167.65px;top:81.47px;font-size:7px;color:#3b3b3b;font-weight:400;transform:scaleX(0.924);">Раздел</div>
<div class="t" style="left:157.65px;top:93.47px;font-size:7px;color:#66717f;font-weight:400;transform:scaleX(0.936);">Слайды</div>
<div class="t" style="left:289.65px;top:59.07px;font-size:7px;color:#a9a9a9;font-weight:400;transform:scaleX(0.949);">80</div>
<div class="t" style="left:272.65px;top:93.07px;font-size:7px;color:#66717f;font-weight:400;transform:scaleX(1.061);">Шрифт</div>
<div class="t" style="left:455.65px;top:93.57px;font-size:7px;color:#66717f;font-weight:400;transform:scaleX(1.093);">Абзац</div>
<div class="t" style="left:482.65px;top:53.57px;font-size:7px;color:#a9a9a9;font-weight:400;transform:scaleX(1.016);">Направление текста</div>
<div class="t" style="left:482.65px;top:67.57px;font-size:7px;color:#a9a9a9;font-weight:400;transform:scaleX(1.016);">Выровнять текст</div>
<div class="t" style="left:482.65px;top:81.57px;font-size:7px;color:#a9a9a9;font-weight:400;transform:scaleX(1.018);">Преобразовать в SmartArt</div>
<div class="t" style="left:671.65px;top:75.07px;font-size:7px;color:#3b3b3b;font-weight:400;transform:scaleX(1.091);">Упорядочить</div>
<div class="t" style="left:720.15px;top:75.07px;font-size:7px;color:#a9a9a9;font-weight:400;transform:scaleX(0.994);">Экспресс-стили</div>
<div class="t" style="left:692.65px;top:93.07px;font-size:7px;color:#66717f;font-weight:400;transform:scaleX(1.004);">Рисование</div>
<div class="t" style="left:786.65px;top:53.97px;font-size:7px;color:#a9a9a9;font-weight:400;transform:scaleX(1.018);">Заливка фигуры</div>
<div class="t" style="left:786.15px;top:67.57px;font-size:7px;color:#a9a9a9;font-weight:400;transform:scaleX(1.041);">Контур фигуры</div>
<div class="t" style="left:786.65px;top:81.57px;font-size:7px;color:#a9a9a9;font-weight:400;transform:scaleX(1.002);">Эффекты фигур</div>
<div class="t" style="left:869.65px;top:53.57px;font-size:7px;color:#222;font-weight:400;transform:scaleX(1.022);-webkit-text-stroke:0.2px #222">Найти</div>
<div class="t" style="left:869.65px;top:67.57px;font-size:7px;color:#3b3b3b;font-weight:400;transform:scaleX(0.998);">Заменить</div>
<div class="t" style="left:869.65px;top:81.57px;font-size:7px;color:#3b3b3b;font-weight:400;transform:scaleX(0.972);">Выделить</div>
<div class="t" style="left:854.65px;top:93.07px;font-size:7px;color:#66717f;font-weight:400;transform:scaleX(1.040);">Редактирование</div>
<div class="t" style="left:13.65px;top:107.07px;font-size:7px;color:#444;font-weight:400;transform:scaleX(0.975);">Слайды</div>
<div class="t" style="left:57.65px;top:107.07px;font-size:7px;color:#555;font-weight:400;transform:scaleX(1.006);">Структура</div>
<div class="t" style="left:8.62px;top:124.65px;font-size:7.5px;color:#111;font-weight:700;transform:scaleX(0.700);">1</div>
<div class="t" style="left:415.10px;top:443.03px;font-size:38px;color:#2c2c2c;font-weight:400;transform:scaleX(0.930);-webkit-text-stroke:0.5px #2c2c2c">Comic</div>
<div class="t" style="left:528.10px;top:443.03px;font-size:38px;color:#2c2c2c;font-weight:400;transform:scaleX(0.925);-webkit-text-stroke:0.5px #2c2c2c">Sans</div>
<div class="t" style="left:620.10px;top:443.03px;font-size:38px;color:#2c2c2c;font-weight:400;transform:scaleX(0.916);-webkit-text-stroke:0.5px #2c2c2c">на</div>
<div class="t" style="left:671.10px;top:443.03px;font-size:38px;color:#2c2c2c;font-weight:400;transform:scaleX(0.989);-webkit-text-stroke:0.5px #2c2c2c">месте</div>
<div class="t" style="left:182.97px;top:633.61px;font-size:10.5px;color:#333;font-weight:400;transform:scaleX(0.965);">Заметки к слайду</div>
<div class="t" style="left:7.65px;top:662.07px;font-size:7px;color:#4a4a4a;font-weight:400;transform:scaleX(0.967);">Слайд 1 из 1</div>
<div class="t" style="left:59.65px;top:662.07px;font-size:7px;color:#4a4a4a;font-weight:400;transform:scaleX(1.042);">"NewsPrint"</div>
<div class="t" style="left:1074.65px;top:662.07px;font-size:7px;color:#4a4a4a;font-weight:400;transform:scaleX(1.033);">111%</div>
</body></html>
